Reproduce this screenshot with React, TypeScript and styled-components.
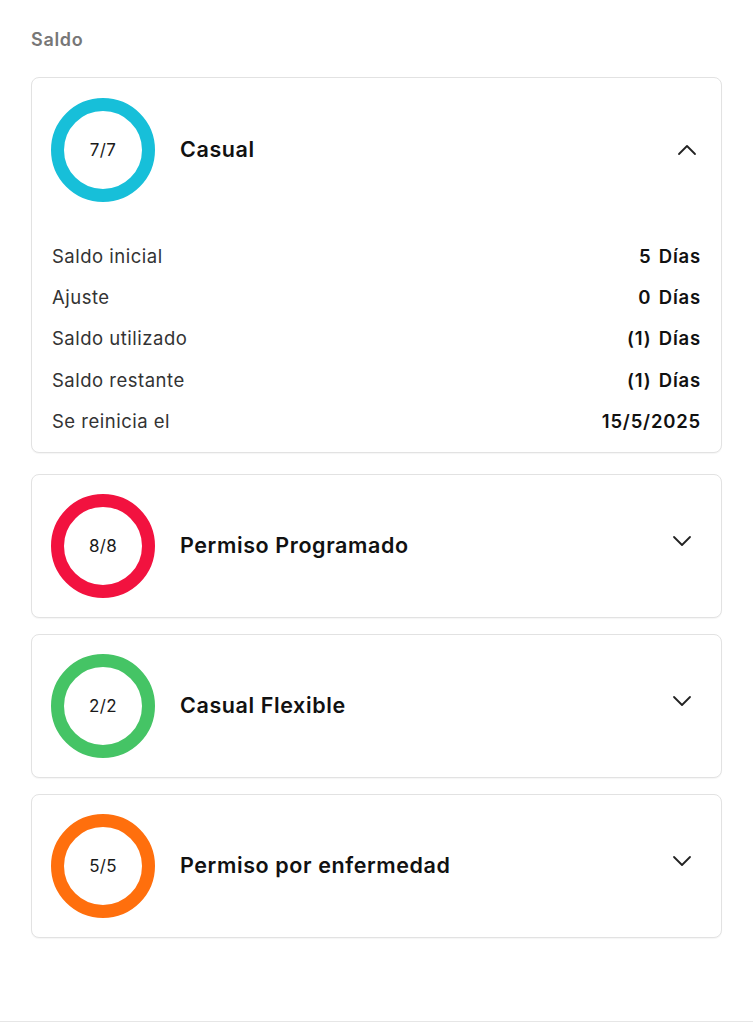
import React from 'react';
import styled, { createGlobalStyle } from 'styled-components';

const GlobalStyle = createGlobalStyle`
  body {
    margin: 0;
    background: #ffffff;
    font-family: Inter, 'Open Sans', sans-serif;
    color: #111111;
  }
`;

const Page = styled.div`
  height: 1022px;
  border-bottom: 1px solid #e6e6e6;
  padding: 29px 31px 0 31px;
  box-sizing: border-box;
`;

const Heading = styled.h2`
  font-size: 18px;
  font-weight: 600;
  letter-spacing: 0.7px;
  color: #777777;
  margin: 0 0 27px 0;
  line-height: 21px;
`;

const List = styled.div`
  display: flex;
  flex-direction: column;
`;

const Card = styled.div<{ gapAfter: number }>`
  border: 1px solid #e2e2e2;
  border-radius: 8px;
  background: #ffffff;
  margin-bottom: ${(props) => props.gapAfter}px;
  box-shadow: 0 1px 1px rgba(0, 0, 0, 0.04);
`;

const Header = styled.div<{ expanded: boolean }>`
  display: flex;
  align-items: center;
  padding: ${(props) => (props.expanded ? '20px 24px 0 19px' : '19px 29px 19px 19px')};
`;

const Ring = styled.div<{ color: string }>`
  width: 104px;
  height: 104px;
  border-radius: 50%;
  border: 13px solid ${(props) => props.color};
  box-sizing: border-box;
  display: flex;
  align-items: center;
  justify-content: center;
  font-size: 17px;
  letter-spacing: 0.3px;
  color: #1a1a1a;
  flex-shrink: 0;
`;

const Title = styled.div`
  flex: 1;
  margin-left: 25px;
  font-size: 21.5px;
  font-weight: 600;
  letter-spacing: 0.6px;
  color: #111111;
  margin-top: -2px;
`;

const Chevron = styled.div<{ lift: number }>`
  display: flex;
  align-items: center;
  justify-content: center;
  width: 20px;
  height: 20px;
  margin-top: ${(props) => -props.lift * 2}px;
`;

const Details = styled.div`
  display: flex;
  flex-direction: column;
  padding: 33px 20px 11px 20px;
`;

const Row = styled.div`
  display: flex;
  justify-content: space-between;
  align-items: center;
  height: 41.3px;
  font-size: 18.5px;
  letter-spacing: 0.5px;
`;

const Label = styled.span`
  color: #333333;
`;

const Value = styled.span`
  font-weight: 600;
  color: #111111;
  letter-spacing: 0.8px;
  word-spacing: 2px;
`;

type Leave = {
  name: string;
  count: string;
  color: string;
  expanded?: boolean;
};

const leaves: Leave[] = [
  { name: 'Casual', count: '7/7', color: '#17bfd9', expanded: true },
  { name: 'Permiso Programado', count: '8/8', color: '#f2123f' },
  { name: 'Casual Flexible', count: '2/2', color: '#45c465' },
  { name: 'Permiso por enfermedad', count: '5/5', color: '#ff6f0d' },
];

const details = [
  ['Saldo inicial', '5 Días'],
  ['Ajuste', '0 Días'],
  ['Saldo utilizado', '(1) Días'],
  ['Saldo restante', '(1) Días'],
  ['Se reinicia el', '15/5/2025'],
];

function ChevronIcon({ up }: { up: boolean }) {
  return (
    <svg width="20" height="20" viewBox="0 0 20 20" fill="none">
      <path
        d={up ? 'M2 14L10 6L18 14' : 'M2 6L10 14L18 6'}
        stroke="#222222"
        strokeWidth="1.8"
        strokeLinecap="round"
        strokeLinejoin="round"
      />
    </svg>
  );
}

function App() {
  return (
    <Page>
      <GlobalStyle />
      <Heading>Saldo</Heading>
      <List>
        {leaves.map((leave, i) => (
          <Card key={leave.name} gapAfter={i === 0 ? 21 : 16}>
            <Header expanded={!!leave.expanded}>
              <Ring color={leave.color}>{leave.count}</Ring>
              <Title>{leave.name}</Title>
              <Chevron lift={leave.expanded ? 0 : 5}>
                <ChevronIcon up={!!leave.expanded} />
              </Chevron>
            </Header>
            {leave.expanded && (
              <Details>
                {details.map(([label, value]) => (
                  <Row key={label}>
                    <Label>{label}</Label>
                    <Value>{value}</Value>
                  </Row>
                ))}
              </Details>
            )}
          </Card>
        ))}
      </List>
    </Page>
  );
}

export default App;
